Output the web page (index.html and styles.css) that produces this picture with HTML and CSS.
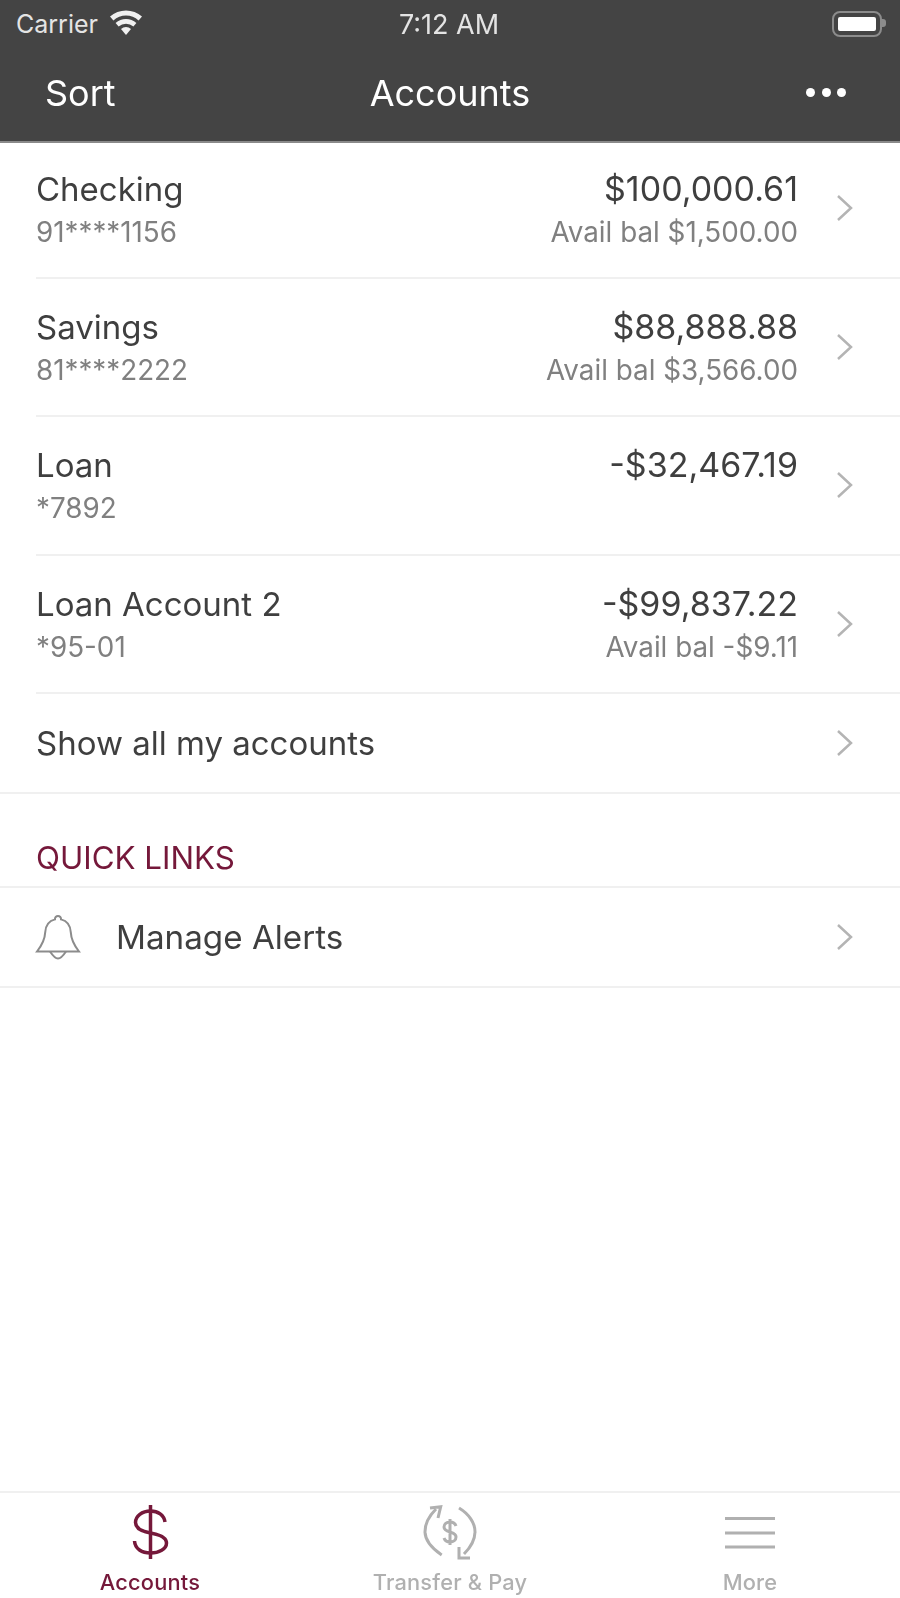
FILE: index.html
```html
<!DOCTYPE html>
<html lang="en">
<head>
    <meta charset="UTF-8">
    <meta name="viewport" content="width=device-width, initial-scale=1.0">
    <title>Accounts</title>
    <link rel="stylesheet" href="styles.css">
</head>
<body>
    <div class="app">
        <header class="top-bar">
            <div class="status-bar">
                <div class="status-left">
                    <span>Carrier</span>
                    <svg class="wifi" viewBox="0 0 34 26" aria-hidden="true">
                        <path d="M17 26l-5-6a7.5 7.5 0 0 1 10 0z"/>
                        <path d="M9.6 17.4l-3-3.5a16 16 0 0 1 20.8 0l-3 3.5a11.5 11.5 0 0 0-14.8 0z"/>
                        <path d="M4.4 11.4L1 7.5a24 24 0 0 1 32 0l-3.4 3.9a19 19 0 0 0-25.2 0z"/>
                    </svg>
                </div>
                <span class="status-time">7:12 AM</span>
                <div class="battery"><span class="battery-fill"></span></div>
            </div>
            <div class="nav-bar">
                <span class="nav-side">Sort</span>
                <span class="nav-title">Accounts</span>
                <div class="nav-more"><i></i><i></i><i></i></div>
            </div>
        </header>

        <main class="content">
            <ul class="accounts">
                <li class="account">
                    <div class="account-info">
                        <div class="account-name">Checking</div>
                        <div class="account-sub">91****1156</div>
                    </div>
                    <div class="account-amounts">
                        <div class="account-balance">$100,000.61</div>
                        <div class="account-sub">Avail bal $1,500.00</div>
                    </div>
                    <svg class="chevron" viewBox="0 0 18 28"><path d="M2 2l13 12L2 26"/></svg>
                </li>
                <li class="account">
                    <div class="account-info">
                        <div class="account-name">Savings</div>
                        <div class="account-sub">81****2222</div>
                    </div>
                    <div class="account-amounts">
                        <div class="account-balance">$88,888.88</div>
                        <div class="account-sub">Avail bal $3,566.00</div>
                    </div>
                    <svg class="chevron" viewBox="0 0 18 28"><path d="M2 2l13 12L2 26"/></svg>
                </li>
                <li class="account">
                    <div class="account-info">
                        <div class="account-name">Loan</div>
                        <div class="account-sub">*7892</div>
                    </div>
                    <div class="account-amounts">
                        <div class="account-balance">-$32,467.19</div>
                    </div>
                    <svg class="chevron" viewBox="0 0 18 28"><path d="M2 2l13 12L2 26"/></svg>
                </li>
                <li class="account">
                    <div class="account-info">
                        <div class="account-name">Loan Account 2</div>
                        <div class="account-sub">*95-01</div>
                    </div>
                    <div class="account-amounts">
                        <div class="account-balance">-$99,837.22</div>
                        <div class="account-sub">Avail bal -$9.11</div>
                    </div>
                    <svg class="chevron" viewBox="0 0 18 28"><path d="M2 2l13 12L2 26"/></svg>
                </li>
            </ul>
            <div class="link-row">
                <span class="account-name">Show all my accounts</span>
                <svg class="chevron" viewBox="0 0 18 28"><path d="M2 2l13 12L2 26"/></svg>
            </div>

            <h2 class="section-title">QUICK LINKS</h2>
            <div class="link-row alerts-row">
                <svg class="bell" viewBox="0 0 46 46">
                    <path d="M23 2a3 3 0 0 1 3 3.4c6.500 1.600 9.500 6.600 9.800 13 .3 7 2.200 11.500 8.200 19.100H2c6-7.600 7.900-12.100 8.200-19.100.3-6.400 3.300-11.400 9.800-13A3 3 0 0 1 23 2z"/>
                    <path d="M15 37.500C18 42 20.500 44.500 23 44.500S28 42 31 37.500"/>
                </svg>
                <span class="account-name">Manage Alerts</span>
                <svg class="chevron" viewBox="0 0 18 28"><path d="M2 2l13 12L2 26"/></svg>
            </div>
        </main>

        <nav class="tab-bar">
            <div class="tab tab-active">
                <svg class="tab-icon tab-icon-bold" viewBox="0 0 60 60">
                    <path d="M30.500 3V57"/>
                    <path d="M45 20C44 13 38 9 30.500 9 22 9 15.500 14 15.500 20.500 15.500 27 22 29.500 30.500 31 39 32.500 46.500 35 46.500 41 46.500 47 39 51 30.500 51 22 51 15 47 14.500 39"/>
                </svg>
                <span>Accounts</span>
            </div>
            <div class="tab">
                <svg class="tab-icon" viewBox="0 0 60 60">
                    <path d="M21.700 53C10 45 5 37 5 29.700 5 22 9 14 16 7"/>
                    <path d="M10 6L20.700 4.700 18 16"/>
                    <path d="M39 6C49 12 55 21 55 29.700 55 38 51 45 44 52"/>
                    <path d="M39 45V56H50"/>
                    <path d="M36 24C35 21 33 20 30 20 26.500 20 24 22 24 25 24 28 26.500 29 30 30 33.500 31 36 32 36 35 36 38 33.500 40 30 40 27 40 25 39 24 36M30 17V43"/>
                </svg>
                <span>Transfer &amp; Pay</span>
            </div>
            <div class="tab">
                <svg class="tab-icon" viewBox="0 0 60 60">
                    <path d="M5 16.500h50M5 31h50M5 45h50"/>
                </svg>
                <span>More</span>
            </div>
        </nav>
    </div>
</body>
</html>
```

FILE: styles.css
```css
* {
    box-sizing: border-box;
}
body {
    margin: 0;
    padding: 0;
    background-color: #fff;
    font-family: Inter, "Liberation Sans", sans-serif;
    color: #3f3f3f;
}
.app {
    display: flex;
    flex-direction: column;
    height: 1598px;
    width: 900px;
    overflow: hidden;
    filter: blur(0.6px); /* the screenshot is an upscaled capture */
}
.top-bar {
    height: 143px;
    background-color: #444;
    border-bottom: 2px solid #8a8a8a;
    color: #fff;
}
.status-bar {
    display: grid;
    grid-template-columns: 1fr auto 1fr;
    align-items: center;
    height: 46px;
    padding: 2px 18px 0 16px;
    font-size: 25px;
    color: #e4e4e4;
}
.status-left {
    display: flex;
    align-items: center;
    gap: 11px;
}
.wifi {
    width: 34px;
    height: 26px;
    margin-top: -4px;
    fill: #f0f0f0;
}
.status-time {
    font-size: 27px;
}
.battery {
    position: relative;
    justify-self: end;
    display: flex;
    width: 50px;
    height: 26px;
    padding: 4px;
    border: 2px solid #8c8c8c;
    border-radius: 8px;
}
.battery::after {
    content: "";
    position: absolute;
    top: 6px;
    right: -6px;
    width: 4px;
    height: 8px;
    background-color: #8c8c8c;
    border-radius: 0 3px 3px 0;
}
.battery-fill {
    flex: 1;
    background-color: #fff;
    border-radius: 2px;
}
.nav-bar {
    display: grid;
    grid-template-columns: 1fr auto 1fr;
    align-items: center;
    height: 93px;
    padding: 0 45px;
    font-size: 36px;
}
.nav-more {
    justify-self: end;
    display: flex;
    gap: 6.500px;
    margin-right: 9px;
}
.nav-more i {
    width: 9px;
    height: 9px;
    background-color: #fff;
    border-radius: 50%;
}
.content {
    flex: 1;
}
.accounts {
    list-style: none;
    margin: 0;
    padding: 0;
}
.account {
    display: flex;
    align-items: center;
    height: 138.500px;
    margin-left: 36px;
    padding-right: 46px;
    border-bottom: 2px solid #f0f0f0;
}
.account:first-child {
    height: 135.500px;
}
.account:first-child .account-info,
.account:first-child .account-amounts {
    padding-top: 24px;
}
.account:first-child .chevron {
    margin-top: -3px;
}
.account-info {
    flex: 1;
}
.account-amounts {
    text-align: right;
}
.account-name {
    font-size: 33px;
    line-height: 44px;
}
.account-balance {
    font-size: 34px;
    line-height: 44px;
}
.account-sub {
    margin-top: 3px;
    font-size: 27.800px;
    line-height: 36px;
    color: #808080;
}
.account-info,
.account-amounts {
    align-self: flex-start;
    padding-top: 26px;
}
.chevron {
    width: 18px;
    height: 28px;
    margin-left: 38px;
    fill: none;
    stroke: #b4b4b4;
    stroke-width: 2.500;
}
.link-row {
    display: flex;
    align-items: center;
    justify-content: space-between;
    height: 100px;
    padding: 0 46px 0 36px;
    border-bottom: 2px solid #f0f0f0;
}
.section-title {
    margin: 0;
    padding: 44px 36px 0;
    height: 94px;
    border-bottom: 2px solid #f0f0f0;
    font-size: 31.300px;
    line-height: 40px;
    font-weight: 400;
    color: #75183a;
}
.alerts-row {
    justify-content: flex-start;
    padding-left: 35px;
}
.alerts-row .account-name {
    flex: 1;
    margin-left: 35px;
    font-size: 33.200px;
}
.bell {
    width: 46px;
    height: 46px;
    fill: none;
    stroke: #8c8c8c;
    stroke-width: 2;
}
.tab-bar {
    display: grid;
    grid-template-columns: 300px 300px 300px;
    height: 107px;
    border-top: 2px solid #f0f0f0;
}
.tab {
    display: flex;
    flex-direction: column;
    align-items: center;
    font-size: 21.800px;
    letter-spacing: 0.2px;
    font-weight: 500;
    line-height: 26px;
    color: #b0b0b0;
}
.tab-active {
    color: #75183a;
}
.tab-icon {
    width: 60px;
    height: 60px;
    margin-top: 9px;
    margin-bottom: 7px;
    fill: none;
    stroke: currentColor;
    stroke-width: 3;
}
.tab-icon-bold {
    stroke-width: 3.500;
}
```
